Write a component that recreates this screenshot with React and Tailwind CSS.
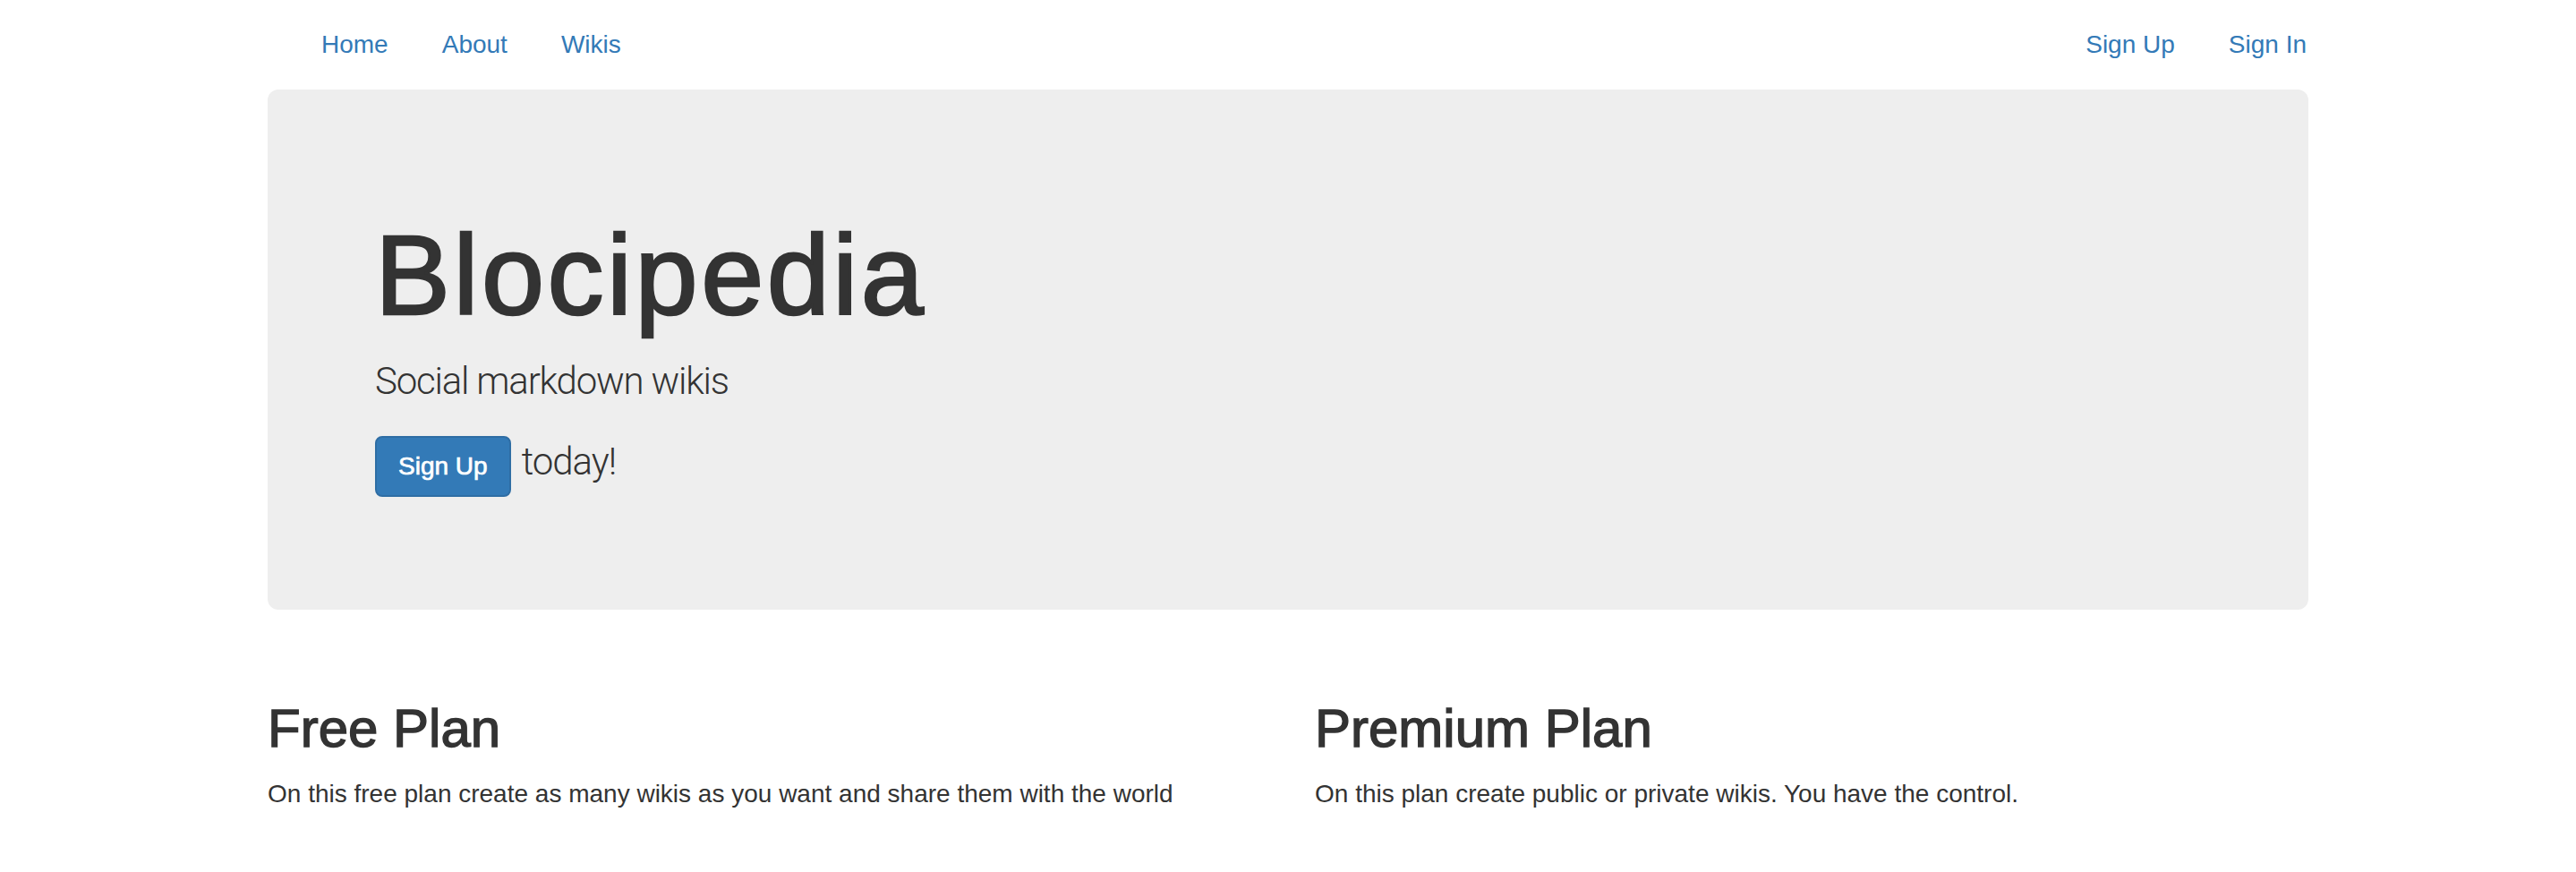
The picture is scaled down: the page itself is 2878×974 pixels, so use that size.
import React from "react";

// ── Nav Link ─────────────────────────────────────────────
function NavLink({ children }) {
  return (
    <a href="#" className="block px-[30px] leading-[40px] text-[28px] text-[#337ab7] no-underline">
      {children}
    </a>
  );
}

// ── Top Navbar ───────────────────────────────────────────
function Navbar() {
  return (
    <nav className="h-[100px] bg-white">
      <div className="mx-auto w-[2340px] px-[30px] h-full flex items-start justify-between pt-[30px]">
        <div className="flex ml-[30px]">
          <NavLink>Home</NavLink>
          <NavLink>About</NavLink>
          <NavLink>Wikis</NavLink>
        </div>
        <div className="flex mr-[-28px]">
          <NavLink>Sign Up</NavLink>
          <NavLink>Sign In</NavLink>
        </div>
      </div>
    </nav>
  );
}

// ── Jumbotron ────────────────────────────────────────────
function Jumbotron() {
  return (
    <div className="bg-[#eeeeee] rounded-[12px] px-[120px] py-[96px]">
      <h1 className="mt-[43px] text-[126px] leading-[1.1] font-normal tracking-[3.5px] text-[#333333] [-webkit-text-stroke:2.5px_#333333]">
        Blocipedia
      </h1>
      <p className="mt-[18px] text-[42px] leading-[60px] font-light tracking-[-1.2px] text-[#333333] font-['Roboto',sans-serif]">
        Social markdown wikis
      </p>
      <div className="mt-[30px] mb-[30px] flex items-baseline">
        <a
          href="#"
          className="inline-block px-[24px] py-[12px] border-2 border-[#2e6da4] bg-[#337ab7] rounded-[8px] text-white text-[28px] leading-[40px] [-webkit-text-stroke:0.7px_#ffffff]"
        >
          Sign Up
        </a>
        <span className="ml-[12px] text-[42px] leading-[60px] font-light tracking-[-1px] text-[#333333] font-['Roboto',sans-serif]">
          today!
        </span>
      </div>
    </div>
  );
}

// ── Plan Column ──────────────────────────────────────────
function Plan({ title, text }) {
  return (
    <div>
      <h2 className="text-[60px] leading-[1.1] font-normal text-[#333333] [-webkit-text-stroke:1.4px_#333333]">
        {title}
      </h2>
      <p className="mt-[20px] text-[28px] leading-[40px] text-[#333333]">{text}</p>
    </div>
  );
}

// ── App ──────────────────────────────────────────────────
export default function App() {
  return (
    <div className="min-h-screen bg-white font-['Liberation_Sans',Arial,sans-serif]">
      <Navbar />
      <div className="mx-auto w-[2340px] px-[30px]">
        <Jumbotron />
        <div className="grid grid-cols-2 gap-[60px] mt-[100px]">
          <Plan
            title="Free Plan"
            text="On this free plan create as many wikis as you want and share them with the world"
          />
          <Plan
            title="Premium Plan"
            text="On this plan create public or private wikis. You have the control."
          />
        </div>
      </div>
    </div>
  );
}
